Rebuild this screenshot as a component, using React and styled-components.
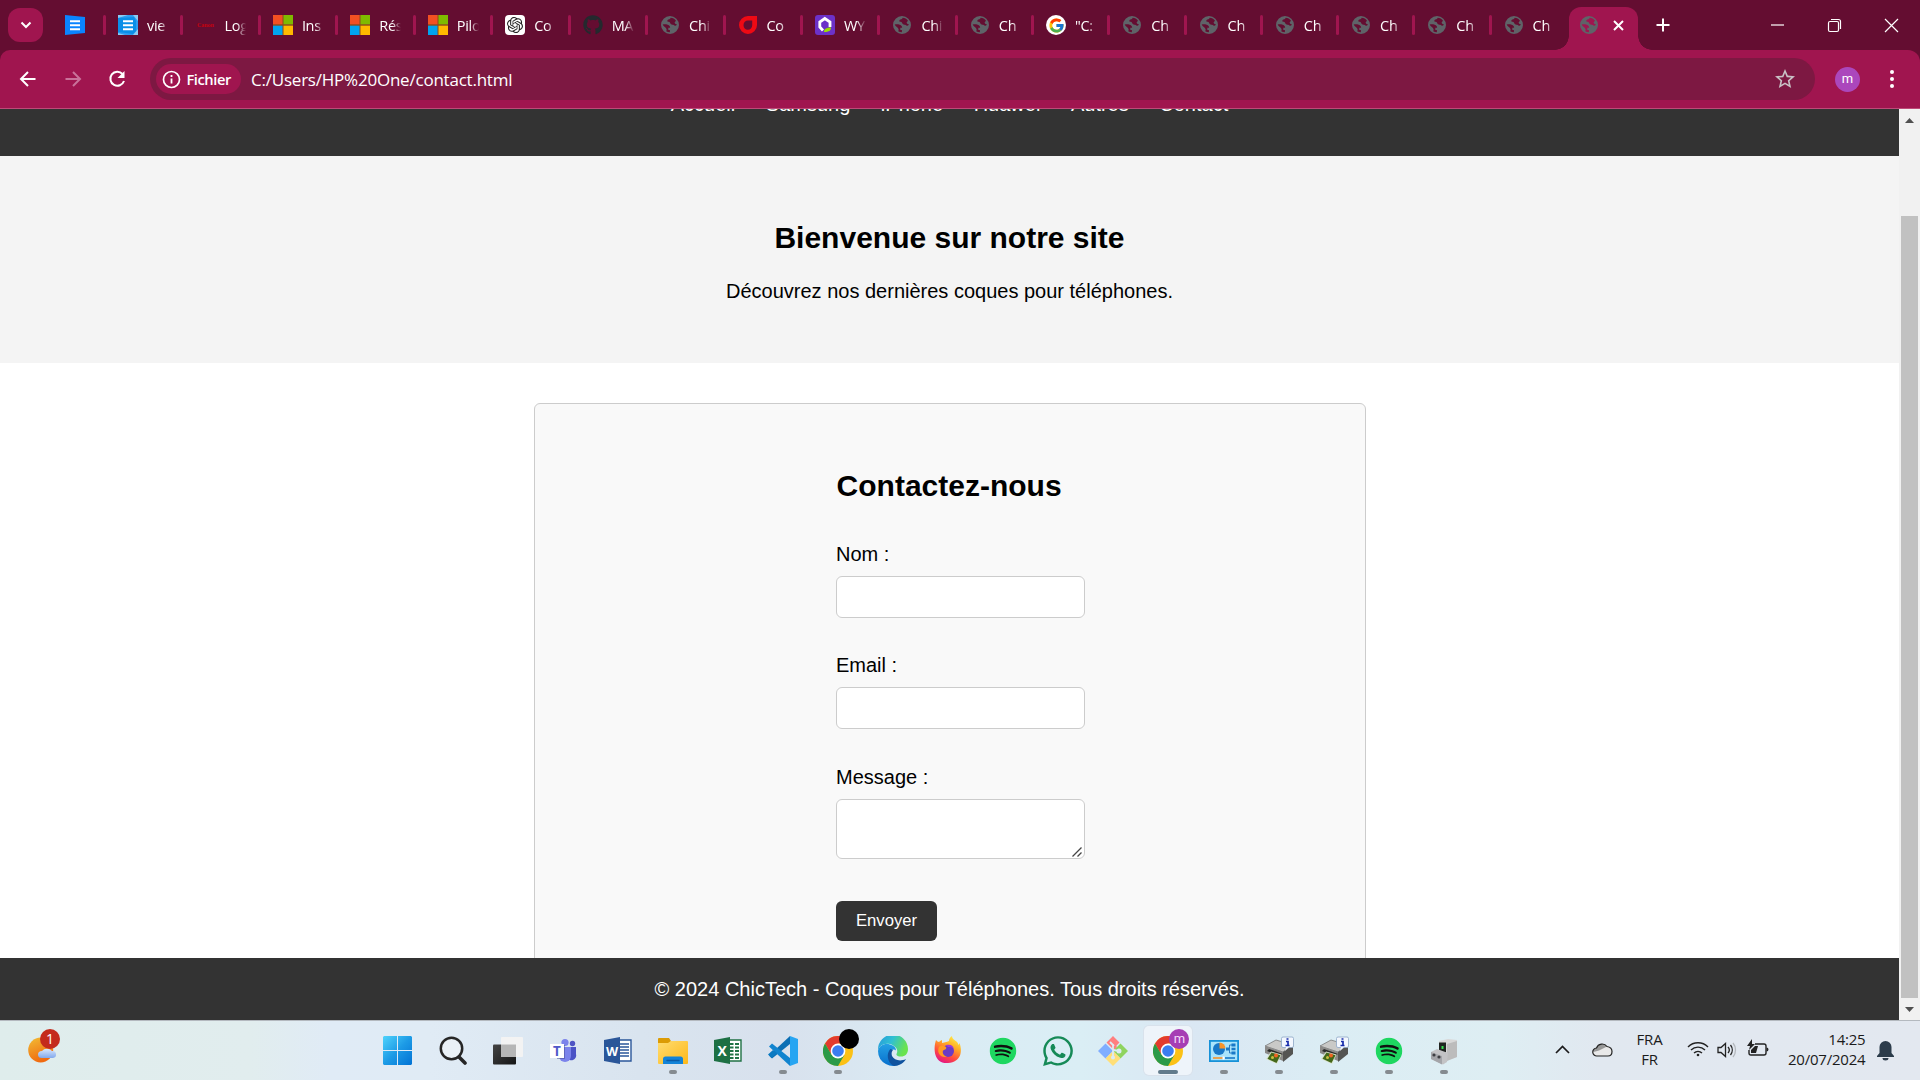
import React from 'react';
import styled, { createGlobalStyle, css } from 'styled-components';
import { FaSpotify, FaWhatsapp, FaGithub } from 'react-icons/fa';
import { FcGoogle } from 'react-icons/fc';
import { SiOpenai } from 'react-icons/si';
import { MdStarOutline } from 'react-icons/md';

const GlobalStyle = createGlobalStyle`
  * { box-sizing: border-box; }
  html, body { margin: 0; padding: 0; overflow: hidden; }
  h2, p { margin: 0; }
`;

const ui = '"Segoe UI", "Open Sans", "Noto Sans", sans-serif';
const arial = '"Liberation Sans", Arial, sans-serif';
const wine = '#640d31';
const pink = '#a0154f';

const Screen = styled.div`
  width: 1920px;
  height: 1080px;
  display: flex;
  flex-direction: column;
  overflow: hidden;
  background: #fff;
  svg { display: block; flex: none; }
`;

/* ---------- tab strip ---------- */
const TabStrip = styled.div`
  height: 50px;
  flex: none;
  display: flex;
  background: ${wine};
  font-family: ${ui};
  color: #fff;
`;
const TabSearch = styled.button`
  width: 35px;
  height: 34px;
  margin: 8px 22px 0 8px;
  padding: 0;
  border: 0;
  border-radius: 12px;
  background: ${pink};
  display: flex;
  align-items: center;
  justify-content: center;
`;
const PinnedTab = styled.div`
  width: 38px;
  padding-top: 15px;
`;
const Tab = styled.div`
  width: ${(p) => p.$width}px;
  flex: none;
  height: 20px;
  margin-top: 15px;
  display: flex;
  align-items: center;
`;
const Separator = styled.span`
  width: 3px;
  height: 20px;
  border-radius: 1.5px;
  background: ${pink};
  margin-right: 12px;
`;
const Favicon = styled.span`
  width: 20px;
  height: 20px;
  display: flex;
  align-items: center;
  justify-content: center;
  flex: none;
`;
const WhiteIcon = styled(Favicon)`
  background: #fff;
  border-radius: ${(p) => (p.$round ? '50%' : '4px')};
`;
const Canon = styled.span`
  color: #c4020f;
  font: bold 6px "Liberation Serif", serif;
`;
const TabTitle = styled.span`
  width: 30px;
  flex: none;
  margin-left: 9px;
  white-space: nowrap;
  font-size: 14.5px;
  line-height: 20px;
  letter-spacing: -0.3px;
  padding-top: 1px;
  mask-image: linear-gradient(90deg, #000 13px, transparent 22px);
`;
const ActiveTab = styled.div`
  position: relative;
  width: 69px;
  height: 43px;
  margin: 7px 0 0 4.3px;
  border-radius: 12px 12px 0 0;
  background: ${pink};
  display: flex;
  align-items: center;
  padding: 0 14px 7px 10px;
  justify-content: space-between;
  &::before, &::after {
    content: '';
    position: absolute;
    bottom: 0;
    width: 14px;
    height: 14px;
  }
  &::before {
    left: -14px;
    background: radial-gradient(circle at 0 0, transparent 13.5px, ${pink} 14px);
  }
  &::after {
    right: -14px;
    background: radial-gradient(circle at 100% 0, transparent 13.5px, ${pink} 14px);
  }
`;
const NewTab = styled.div`
  padding: 18px 0 0 18px;
`;
const WindowControls = styled.div`
  margin-left: auto;
  height: 50px;
  display: flex;
  align-items: center;
  gap: 42px;
  padding-right: 21px;
`;

/* ---------- toolbar ---------- */
const ToolbarBack = styled.div`
  flex: none;
  background: ${wine};
`;
const Toolbar = styled.div`
  height: 59px;
  background: ${pink};
  border-radius: 10px 12px 0 0;
  border-bottom: 1px solid #bd4a78;
  display: flex;
  align-items: center;
  font-family: ${ui};
  color: #fff;
`;
const NavButtons = styled.div`
  width: 150px;
  display: flex;
  gap: 25px;
  padding-left: 18px;
`;
const Omnibox = styled.div`
  width: 1665px;
  height: 42px;
  border-radius: 21px;
  background: #7d1842;
  display: flex;
  align-items: center;
  padding: 0 18px 0 6px;
`;
const Chip = styled.div`
  width: 85px;
  height: 30px;
  border-radius: 15px;
  background: ${pink};
  display: flex;
  align-items: center;
  gap: 5.5px;
  padding-left: 6px;
  font-size: 14.7px;
  font-weight: 600;
  letter-spacing: -0.45px;
`;
const Url = styled.span`
  margin-left: 10px;
  flex: 1;
  font-size: 17px;
  line-height: 24px;
  letter-spacing: -0.22px;
  padding-top: 1px;
`;
const Avatar = styled.div`
  width: ${(p) => p.$size}px;
  height: ${(p) => p.$size}px;
  border-radius: 50%;
  background: #ab47bc;
  color: #fff;
  display: flex;
  align-items: center;
  justify-content: center;
  font: ${(p) => p.$font}px/1 Roboto, sans-serif;
  padding-bottom: 2px;
`;
const ProfileArea = styled.div`
  display: flex;
  align-items: center;
  gap: 29px;
  padding-left: 20px;
`;

/* ---------- page ---------- */
const Viewport = styled.div`
  height: 911px;
  flex: none;
  display: flex;
`;
const Page = styled.div`
  width: 1899px;
  height: 911px;
  display: flex;
  flex-direction: column;
  font: 20px/23px ${arial};
  color: #000;
  background: #fff;
`;
const Header = styled.div`
  height: 47px;
  flex: none;
  overflow: hidden;
  background: #333;
  color: #fff;
  display: flex;
  justify-content: center;
  align-items: flex-end;
  gap: 30.56px;
  padding-bottom: 40px;
`;
const Hero = styled.section`
  height: 207px;
  flex: none;
  padding-top: 65px;
  background: #f4f4f4;
  text-align: center;
`;
const Title = styled.h2`
  font-size: 30px;
  line-height: 34px;
  margin-bottom: ${(p) => p.$gap}px;
  padding-left: ${(p) => p.$indent || 0}px;
`;
const Main = styled.main`
  flex: 1;
  min-height: 0;
  overflow: hidden;
  padding-top: 40px;
`;
const Card = styled.div`
  width: 832px;
  height: 620px;
  margin-left: 534px;
  border: 1px solid #ccc;
  border-radius: 6px;
  background: #f9f9f9;
  padding: 65px 0 0 301px;
`;
const Form = styled.form`
  width: 249px;
  display: flex;
  flex-direction: column;
  align-items: flex-start;
`;
const Label = styled.label`
  margin-bottom: 10px;
`;
const field = css`
  width: 249px;
  background: #fff;
  border: 1px solid #ccc;
  border-radius: 6px;
  outline: 0;
`;
const Input = styled.input`
  ${field}
  height: 42px;
  margin-bottom: ${(p) => p.$after}px;
`;
const TextArea = styled.div`
  ${field}
  height: 60px;
  margin-bottom: 42px;
  display: flex;
  align-items: flex-end;
  justify-content: flex-end;
  padding: 0 2px 1px 0;
`;
const Submit = styled.button`
  width: 101px;
  height: 40px;
  border: 0;
  border-radius: 6px;
  background: #333;
  color: #fff;
  font: 16.667px/20px ${arial};
  padding: 0;
`;
const Footer = styled.footer`
  height: 62px;
  flex: none;
  background: #333;
  color: #fff;
  text-align: center;
  padding-top: 20px;
`;
const Scrollbar = styled.div`
  width: 21px;
  background: #f1f1f1;
  display: flex;
  flex-direction: column;
  align-items: center;
  padding: 9px 1px 8px 0;
`;
const Thumb = styled.div`
  width: 17px;
  height: 782px;
  margin: 93px 0 9px;
  background: #c1c1c1;
`;

/* ---------- taskbar ---------- */
const Taskbar = styled.div`
  height: 60px;
  flex: none;
  display: flex;
  border-top: 1px solid #b4b9bf;
  background: linear-gradient(90deg, #dfedec 0, #e1edee 250px, #e0ebf6 330px, #e0ebf5 430px, #d9e4ef 640px, #d8e1ed 780px, #daebf4 920px, #daeef5 1080px, #dae7f3 1190px, #dbedf4 1330px, #deeef3 1500px, #e1e8f0 1600px, #e3e8f0 100%);
  color: #1b1b1b;
  font-family: ${ui};
`;
const Weather = styled.div`
  width: 370.3px;
  padding: 7px 0 0 28px;
`;
const Apps = styled.div`
  display: flex;
`;
const AppCell = styled.div`
  width: 55.06px;
  height: 59px;
  display: flex;
  justify-content: center;
`;
const Slot = styled.div`
  position: relative;
  width: 48px;
  height: 49px;
  margin-top: 4.5px;
  border-radius: 5px;
  display: flex;
  flex-direction: column;
  align-items: center;
  padding-top: 10px;
  ${(p) => p.$active && 'background: #eef4fa; box-shadow: 0 0 0 1px #d9e2ec;'}
`;
const Indicator = styled.i`
  width: ${(p) => (p.$active ? 20 : 8)}px;
  height: 4px;
  margin-top: 4px;
  border-radius: 2px;
  background: ${(p) => (p.$active ? '#627b8c' : '#858b90')};
`;
const Badge = styled.div`
  position: absolute;
  top: 3px;
  right: 3px;
  width: 20px;
  height: 20px;
  border-radius: 50%;
  background: ${(p) => p.$c};
  color: #f5d9fa;
  font: 13px/19px Roboto, sans-serif;
  text-align: center;
`;
const Tray = styled.div`
  margin-left: auto;
  display: flex;
  align-items: flex-start;
  padding-right: 26.5px;
`;
const TrayIcon = styled.span`
  padding-top: ${(p) => p.$top}px;
  margin-right: ${(p) => p.$gap}px;
`;
const TrayText = styled.div`
  width: ${(p) => p.$w}px;
  margin-right: ${(p) => p.$gap}px;
  padding-top: 9px;
  font-size: 15px;
  line-height: 19.5px;
  text-align: ${(p) => p.$align};
  letter-spacing: ${(p) => p.$ls}px;
  white-space: nowrap;
`;

/* ---------- drawn icons ---------- */
const Stroke = ({ w = 16, h = 16, d, sw = 2, color = '#fff', ...rest }) => (
  <svg width={w} height={h} viewBox={`0 0 ${w} ${h}`} fill="none" stroke={color} strokeWidth={sw} {...rest}>
    <path d={d} />
  </svg>
);
const GlobeIcon = () => (
  <svg width="20" height="20" viewBox="0 0 20 20">
    <path
      fill="#5f6368"
      fillRule="evenodd"
      d="M10 1a9 9 0 1 1 0 18 9 9 0 0 1 0-18zM2.700 9.600c1.500-.4 3.300-.3 5 .1 1.700.5 2.500 1.500 2.400 3.100H8.300v2.100H9.900v2.300A7.300 7.300 0 0 1 6.200 16.200c.8-1 .6-2.200-.5-3.400-1.200-1-2.400-1.800-3-3.200zM10.600 2.800c2.200.1 4.200 1.200 5.400 3-1 .9-1.500 1.600-1.300 2.300.3 1 1.400.9 2.300 1.500-.6 1.300-1.700 1.500-2.900.6-1.200-.7-2.300-.4-3.300-1.200-1-.9-.6-2-2.300-2.200-.9-.1-1.300-.7-1.100-1.400.4-1.300 2.900-.5 3.200-2.600z"
    />
  </svg>
);
const DocIcon = ({ shaded }) => (
  <svg width="20" height="20" viewBox="0 0 20 20">
    {shaded && <path fill="#2f9df0" d="M0 0h20v20H0z" />}
    {shaded && <path fill="#8ccbf2" d="M0 0h10L0 3zM15 0h5v6zM0 18l7 2H0zM20 14v6h-5z" />}
    <path fill={shaded ? '#0a8fe8' : '#0a84ff'} d={shaded ? 'M0 3 16 2l2 4v10l-3 3L0 17z' : 'M0 0l20 2v16L0 20z'} />
    <path stroke="#fff" strokeWidth="2" d="M5 6.200h10M5 10.200h10M5 14.200h10" />
  </svg>
);
const Microsoft = () => (
  <svg width="20" height="20" viewBox="0 0 20 20">
    <path fill="#8b4a1c" d="M0 0h20v20H0z" />
    <path fill="#f25022" d="M0 0h9.500v9.300H0z" />
    <path fill="#7fba00" d="M10.500 0H20v9.300h-9.500z" />
    <path fill="#00a4ef" d="M0 10.700h9.500V20H0z" />
    <path fill="#ffb900" d="M10.500 10.700H20V20h-9.500z" />
  </svg>
);
const Drop = () => (
  <svg width="18" height="18" viewBox="0 0 18 18">
    <path fill="#ed0a14" fillRule="evenodd" d="M9 0h9v9a9 9 0 1 1-9-9zM9 4.500c-2.500 0-4.500 2-4.500 4.700 0 2.600 1.800 4.600 4.300 4.600s4.400-2 4.400-4.600V4.500z" />
  </svg>
);
const Ring = () => (
  <svg width="20" height="20" viewBox="0 0 20 20">
    <rect width="20" height="20" rx="3" fill="#6c31c8" />
    <path d="M8 15.500 4.800 12V7l5-3.500 5.200 3.500v5" fill="none" stroke="#fff" strokeWidth="2.800" />
    <path d="M9 17c0-3 2-4.500 7-4.500 0 3-2 4.500-7 4.500z" fill="#9be000" />
  </svg>
);
const ChromeIcon = () => (
  <svg width="30" height="30" viewBox="0 0 30 30">
    <circle cx="15" cy="15" r="15" fill="#fbc116" />
    <path fill="#e33b2e" d="M2 7.500A15 15 0 0 1 28 7.500H15L8.500 18.750z" />
    <path fill="#2b9a48" d="M2 7.500A15 15 0 0 0 15 30l6.500-11.250L15 22 8.500 18.750z" />
    <circle cx="15" cy="15" r="7.400" fill="#fff" />
    <circle cx="15" cy="15" r="5.800" fill="#3b7df0" />
  </svg>
);
const StartIcon = () => (
  <svg width="29" height="29" viewBox="0 0 29 29">
    <defs>
      <linearGradient id="st" gradientUnits="userSpaceOnUse" x1="0" y1="0" x2="29" y2="29">
        <stop stopColor="#4fd3fc" /><stop offset=".5" stopColor="#1d9be6" /><stop offset="1" stopColor="#0272d4" />
      </linearGradient>
    </defs>
    <path fill="url(#st)" d="M1 0h13v14H0V1zM15 0h13l1 1v13H15zM0 15h14v14H1l-1-1zM15 15h14v13l-1 1H15z" />
  </svg>
);
const SearchIcon = () => (
  <svg width="28" height="30" viewBox="0 0 28 30" fill="none" stroke="#262626">
    <circle cx="12.500" cy="12.500" r="10.700" strokeWidth="2.500" fill="#eaf1f7" />
    <path d="M20 21l6 6" strokeWidth="3.600" strokeLinecap="round" />
  </svg>
);
const TaskViewIcon = () => (
  <svg width="30" height="30" viewBox="0 0 30 30">
    <defs><linearGradient id="tv" x1="0" y1="0" x2="1" y2="1"><stop stopColor="#444" /><stop offset="1" stopColor="#151515" /></linearGradient></defs>
    <rect x="0" y="8.500" width="23" height="20" rx="1" fill="url(#tv)" />
    <rect x="8" y="1" width="22" height="20" rx="1" fill="#f3f3f3" />
    <path d="M8 8.500h15V21H8z" fill="#b6b6b6" />
  </svg>
);
const SvgLetter = styled.text`
  font-family: "Open Sans", sans-serif;
  font-weight: ${(p) => p.$weight || 700};
`;
const TeamsIcon = () => (
  <svg width="30" height="30" viewBox="0 0 30 30">
    <circle cx="24.500" cy="7.500" r="2.700" fill="#4f55c4" />
    <path d="M19 11h9v7a4.500 4.500 0 0 1-9 3z" fill="#4b53c6" />
    <circle cx="17" cy="6.500" r="3.600" fill="#7b83eb" />
    <path d="M11 11h12v9a6 6 0 0 1-12 0z" fill="#7b83eb" />
    <path d="M3 9h14v14H9V9z" fill="#444791" opacity=".5" />
    <path d="M2 8h14v14H2z" fill="#fff" />
    <SvgLetter x="5" y="20" fontSize="13.500" fill="#5059c9">T</SvgLetter>
  </svg>
);
const OfficeIcon = ({ letter, color, dark, grid }) => (
  <svg width="28" height="30" viewBox="0 0 28 30">
    <path d="M14 4h13v21H14z" fill="#fff" stroke={color} strokeWidth="1.400" />
    {grid
      ? <path d="M16 8h3.500M21 8h4M16 11.500h3.500M21 11.500h4M16 15h3.500M21 15h4M16 18.500h3.500M21 18.500h4M16 22h3.500M21 22h4" stroke={color} strokeWidth="2.200" />
      : <path d="M16 8h9M16 11h9M16 14h9M16 17h9M16 20h9" stroke={color} strokeWidth="1.400" />}
    <path d="M0 4 16 1v27L0 25z" fill={dark} />
    <SvgLetter x={grid ? 3.500 : 2} y="19.500" fontSize={grid ? 14 : 12.500} fill="#fff">{letter}</SvgLetter>
  </svg>
);
const FolderIcon = () => (
  <svg width="30" height="30" viewBox="0 0 30 30">
    <defs><linearGradient id="fo" x1="0" y1="0" x2="1" y2="1"><stop stopColor="#ffdc70" /><stop offset="1" stopColor="#fdb819" /></linearGradient></defs>
    <path d="M0 3q0-1 1-1h10l2 3-2 4H0z" fill="#dc9b04" />
    <path d="M0 7h10l3-2h16q1 0 1 1v21q0 1-1 1H1q-1 0-1-1z" fill="url(#fo)" />
    <path d="M5 28v-5q0-2.500 2.500-2.500h15Q25 20.500 25 23v5z" fill="#1383d8" />
    <path d="M9 24.500h12" stroke="#0b5aa5" strokeWidth="1.400" strokeLinecap="round" />
  </svg>
);
const CodeIcon = () => (
  <svg width="30" height="30" viewBox="0 0 30 30">
    <path d="M1 19.500 22 0v8L4 22.500z" fill="#0b6fb4" />
    <path d="M1 10.500 22 30v-8L4 7.500z" fill="#1184cf" />
    <path d="M0 18.500 5 14l4 3-5.500 5z" fill="#0b7ac2" />
    <path d="M22 0l8 3v24l-8 3z" fill="#27a5f2" />
  </svg>
);
const EdgeIcon = () => (
  <svg width="30" height="30" viewBox="0 0 30 30">
    <defs>
      <linearGradient id="ea" x1="0" y1="0" x2="1" y2=".35"><stop stopColor="#2799dc" /><stop offset=".5" stopColor="#30c0d2" /><stop offset="1" stopColor="#69e34f" /></linearGradient>
      <linearGradient id="eb" x1="0" y1="0" x2="0" y2="1"><stop stopColor="#24a0e4" /><stop offset="1" stopColor="#0870cd" /></linearGradient>
    </defs>
    <path d="M0 14A15 15 0 0 1 30 13c0 5-3 7.500-7 7.500-3 0-5-1-4.500-2.500C21 13 17 10 12 8 6 7 2 9 0 14z" fill="url(#ea)" />
    <path d="M0 15C1 9 7 7 12 8.500c4 1 6 3 6 6-2-2-6-1-6 4 0 6 5 9 11 9A15 15 0 0 1 0 15z" fill="url(#eb)" />
    <path d="M12.500 13C8 17 9 27 16 30c5 0 10-3 12-7-6 3-12 1-14-3-1-3 0-5 1-6z" fill="#10539f" />
  </svg>
);
const FirefoxIcon = () => (
  <svg width="30" height="30" viewBox="0 0 30 30">
    <defs><linearGradient id="fx" x1=".8" y1="0" x2=".3" y2="1"><stop stopColor="#fff04a" /><stop offset=".35" stopColor="#ffae24" /><stop offset=".7" stopColor="#ff4b3e" /><stop offset="1" stopColor="#e31587" /></linearGradient></defs>
    <path d="M3 4c1 1 2 2 3 2 1-1 2-1.500 3-2v3c3-1 6-1 7-2 0-2 1-4 3-5 0 3 3 4 5 6 1 1 1 2 1.500 3l1-2c3 8 2 19-11.500 20C1 28 0 13 3 4z" fill="url(#fx)" />
    <circle cx="15" cy="15" r="6" fill="#6a3bc4" />
    <path d="M6 11c3-2 5-1 7 0 1 2-1 2.500-3 3.500-1 3 1 5.500 4 6-5 2-11-3-8-9.500z" fill="#ff9a22" />
    <path d="M13 9c4-1 7 0 8 4-2-2-4-2-6-2z" fill="#9b35df" />
  </svg>
);
const SpotifyIcon = () => (
  <svg width="30" height="30" viewBox="0 0 30 30">
    <circle cx="15" cy="15" r="12" fill="#101010" />
    <FaSpotify x="1.300" y="1.300" size="27.400" color="#1ed760" />
  </svg>
);
const WhatsIcon = () => (
  <svg width="30" height="30" viewBox="0 0 30 30">
    <FaWhatsapp x="-2" y="-2" size="34" color="#168a57" />
  </svg>
);
const GitIcon = () => (
  <svg width="30" height="30" viewBox="0 0 30 30">
    <path d="M15 0l6.500 6.500-3 3c1 3-1 4-3 4L8.500 6.500z" fill="#ff7f7f" />
    <path d="M7.500 7.500 15 15l-7.500 7.500L0 15z" fill="#80aeff" />
    <path d="M22.500 7.500 30 15l-7.500 7.500L15 15z" fill="#8fd45f" />
    <path d="M15 15l7.500 7.500L15 30l-7.500-7.500z" fill="#ffdf78" />
    <circle cx="21" cy="15" r="2.500" fill="#dcecf4" /><circle cx="15" cy="21.500" r="2" fill="#dcecf4" />
    <path d="M15 8v6l6 1M12 6l4 4M15 15v6" stroke="#dcecf4" strokeWidth="1.800" fill="none" />
  </svg>
);
const PanelIcon = () => (
  <svg width="30" height="30" viewBox="0 0 30 30">
    <rect x=".9" y="4.900" width="28.200" height="20.200" fill="#a9e4fb" stroke="#1691d8" strokeWidth="1.800" />
    <circle cx="10" cy="13" r="6" fill="#1879c8" />
    <path d="M10.500 12.500v-6a6 6 0 0 1 6 6z" fill="#f7942a" />
    <path d="M17 13h3.500m0-4v8M20.500 9h3m-3 8h3" stroke="#2b7cc0" fill="none" />
    <path d="M22.500 7.500h4v3h-4zM22.500 11.700h4v2.600h-4zM22.500 15.500h4v3h-4zM17 11.500h3v3h-3z" fill="#1879c8" />
    <path d="M4 22h10" stroke="#f7942a" strokeWidth="1.600" /><path d="M16 22h10" stroke="#1879c8" strokeWidth="1.600" /><path d="M14.500 20.500v3" stroke="#fff" strokeWidth="2" />
  </svg>
);
const PrinterIcon = () => (
  <svg width="30" height="30" viewBox="0 0 30 30">
    <path d="M1 10 12 4l17 5-10 7z" fill="#c9c9c7" stroke="#6c6c6c" strokeWidth=".7" />
    <path d="M1 10l18 6v9L1 17z" fill="#8b8a88" />
    <path d="M19 16 29 9v9l-10 8z" fill="#555553" />
    <path d="M5 13l14 5-4 2-12-5z" fill="#2b2b29" />
    <path d="M7 15.500l10.500 3L13 28 2 23z" fill="#d9e2cc" />
    <path d="M7.500 16.500l9 2.800L12.500 27 3.500 22.800z" fill="#43681a" />
    <circle cx="12" cy="19.500" r="2" fill="#f06422" /><circle cx="8.500" cy="21.500" r="1.500" fill="#c9c03e" />
    <rect x="17.500" y="1" width="12" height="10.500" rx="1.500" fill="#f4f8ff" stroke="#8da6c5" strokeWidth=".8" />
    <path d="M22 11l-1 4 4-4z" fill="#f4f8ff" />
    <path d="M22 5.500h2v4M21.500 9.500h4M22.500 3h2" stroke="#162bab" strokeWidth="1.700" fill="none" />
  </svg>
);
const DeviceIcon = () => (
  <svg width="30" height="30" viewBox="0 0 30 30">
    <path d="M10 5l9-2 9 1v17l-9 3-9-3z" fill="#d8d8d8" />
    <path d="M18 8l10-3v16l-10 4z" fill="#bcbcbc" />
    <path d="M10 6.500h7v10h-7z" fill="#202421" /><path d="M12.500 10h2v3h-2z" fill="#36e150" />
    <path d="M2 16l6-3 11 4-1 9-4 2.500L2 23z" fill="#c3c3c5" />
    <path d="M2 16l11 4v8.500L2 23z" fill="#a4a5a9" />
    <circle cx="5" cy="19" r="1.600" fill="#3d3e42" /><circle cx="10" cy="21" r="1.600" fill="#3d3e42" />
  </svg>
);
const WeatherIcon = () => (
  <svg width="32" height="37" viewBox="0 0 32 37">
    <defs>
      <linearGradient id="su" x1="0" y1="0" x2=".4" y2="1"><stop stopColor="#f2bd35" /><stop offset="1" stopColor="#f06a10" /></linearGradient>
      <linearGradient id="cl" x1="0" y1="0" x2="0" y2="1"><stop stopColor="#d9e8fd" /><stop offset="1" stopColor="#83a9ec" /></linearGradient>
    </defs>
    <circle cx="12.700" cy="22" r="12.500" fill="url(#su)" />
    <path d="M14 30a4 3.500 0 0 1 0-7 6 5 0 0 1 10 0 3.500 3.500 0 0 1 1 7z" fill="url(#cl)" />
    <circle cx="22" cy="11" r="10" fill="#c42b1c" />
    <SvgLetter $weight={400} x="18" y="16" fontSize="14" fill="#fff">1</SvgLetter>
  </svg>
);

const tabs = [
  ['doc', 'vie'], ['canon', 'Log'], ['ms', 'Ins'], ['ms', 'Rés'], ['ms', 'Pilo'], ['ai', 'Co'], ['git', 'MA'],
  ['globe', 'Chi'], ['drop', 'Co'], ['ring', 'WY'], ['globe', 'Chi'], ['globe', 'Ch'], ['google', '"C:'],
  ['globe', 'Ch'], ['globe', 'Ch'], ['globe', 'Ch'], ['globe', 'Ch'], ['globe', 'Ch'], ['globe', 'Ch'],
];
const faviconFor = {
  doc: <DocIcon shaded />,
  canon: <Canon>Canon</Canon>,
  ms: <Microsoft />,
  ai: <WhiteIcon><SiOpenai size={16} color="#222" /></WhiteIcon>,
  git: <FaGithub size={20} color="#24292e" />,
  globe: <GlobeIcon />,
  drop: <Drop />,
  ring: <Ring />,
  google: <WhiteIcon $round><FcGoogle size={17} /></WhiteIcon>,
};
const apps = [
  [StartIcon], [SearchIcon], [TaskViewIcon], [TeamsIcon],
  [() => <OfficeIcon letter="W" color="#2b579a" dark="#2a5699" />],
  [FolderIcon, 'run'],
  [() => <OfficeIcon letter="X" color="#207245" dark="#1d7044" grid />],
  [CodeIcon, 'run'], [ChromeIcon, 'run', 'black'], [EdgeIcon], [FirefoxIcon], [SpotifyIcon], [WhatsIcon], [GitIcon],
  [ChromeIcon, 'active', 'm'], [PanelIcon, 'run'], [PrinterIcon, 'run'], [PrinterIcon, 'run'], [SpotifyIcon, 'run'], [DeviceIcon, 'run'],
];

export default function App() {
  return (
    <Screen>
      <GlobalStyle />
      <TabStrip>
        <TabSearch><Stroke w={12} h={8} d="M1.500 1.500 6 6l4.500-4.500" /></TabSearch>
        <PinnedTab><DocIcon /></PinnedTab>
        {tabs.map(([icon, title], i) => (
          <Tab key={i} $width={i < 11 ? 77.45 : 76.25}>
            <Separator />
            <Favicon>{faviconFor[icon]}</Favicon>
            <TabTitle>{title}</TabTitle>
          </Tab>
        ))}
        <ActiveTab>
          <Favicon>{faviconFor.globe}</Favicon>
          <Stroke w={11} h={11} d="M1 1l9 9M10 1 1 10" />
        </ActiveTab>
        <NewTab><Stroke w={14} h={14} d="M7 .5v13M.5 7h13" /></NewTab>
        <WindowControls>
          <Stroke w={15} h={14} sw={1.2} d="M1 7h13" />
          <Stroke w={15} h={15} sw={1.2} d="M3 3.500h7q1.500 0 1.500 1.500v7q0 1.500-1.500 1.500H3Q1.500 13.500 1.500 12V5Q1.500 3.500 3 3.500zM4 1.500h7.500q2 0 2 2V11" />
          <Stroke w={15} h={15} sw={1.2} d="M1 1l13 13M14 1 1 14" />
        </WindowControls>
      </TabStrip>

      <ToolbarBack>
        <Toolbar>
          <NavButtons>
            <Stroke w={20} h={20} d="M17.500 10H3M10 3l-7 7 7 7" />
            <Stroke w={20} h={20} d="M2.500 10H17M10 3l7 7-7 7" color="#c9729a" />
            <svg width="20" height="20" viewBox="0 0 20 20">
              <path d="M14.500 5A7 7 0 1 0 16 12" fill="none" stroke="#fff" strokeWidth="2" />
              <path d="M16.500 2v7h-7z" fill="#fff" />
            </svg>
          </NavButtons>
          <Omnibox>
            <Chip>
              <svg width="19" height="19" viewBox="0 0 19 19" fill="none" stroke="#fff">
                <circle cx="9.500" cy="9.500" r="8" strokeWidth="1.700" />
                <path d="M9.500 8.500v5M9.500 5v2" strokeWidth="1.800" />
              </svg>
              Fichier
            </Chip>
            <Url>C:/Users/HP%20One/contact.html</Url>
            <MdStarOutline size={24} color="#c9c1c5" />
          </Omnibox>
          <ProfileArea>
            <Avatar $size={25} $font={13}>m</Avatar>
            <svg width="6" height="20" viewBox="0 0 6 20" fill="#fff">
              <circle cx="3" cy="3" r="2" /><circle cx="3" cy="10" r="2" /><circle cx="3" cy="17" r="2" />
            </svg>
          </ProfileArea>
        </Toolbar>
      </ToolbarBack>

      <Viewport>
        <Page>
          <Header>
            {['Accueil', 'Samsung', 'iPhone', 'Huawei', 'Autres', 'Contact'].map((t) => <span key={t}>{t}</span>)}
          </Header>
          <Hero>
            <Title $gap={25}>Bienvenue sur notre site</Title>
            <p>Découvrez nos dernières coques pour téléphones.</p>
          </Hero>
          <Main>
            <Card>
              <Form>
                <Title $gap={40} $indent={0.6}>Contactez-nous</Title>
                <Label>Nom :</Label>
                <Input $after={36} />
                <Label>Email :</Label>
                <Input $after={37} />
                <Label>Message :</Label>
                <TextArea>
                  <Stroke w={10} h={10} sw={1.3} color="#444" d="M.5 9.500l9-9M5.500 9.500l4-4" />
                </TextArea>
                <Submit type="button">Envoyer</Submit>
              </Form>
            </Card>
          </Main>
          <Footer>© 2024 ChicTech - Coques pour Téléphones. Tous droits réservés.</Footer>
        </Page>
        <Scrollbar>
          <svg width="9" height="5" viewBox="0 0 9 5"><path d="M0 5 4.500 0 9 5z" fill="#505050" /></svg>
          <Thumb />
          <svg width="9" height="5" viewBox="0 0 9 5"><path d="M0 0l4.500 5L9 0z" fill="#505050" /></svg>
        </Scrollbar>
      </Viewport>

      <Taskbar>
        <Weather><WeatherIcon /></Weather>
        <Apps>
          {apps.map(([Icon, state, badge], i) => (
            <AppCell key={i}>
              <Slot $active={state === 'active'}>
                <Icon />
                {state && <Indicator $active={state === 'active'} />}
                {badge && <Badge $c={badge === 'm' ? '#a63db4' : '#000'}>{badge === 'm' ? 'm' : ''}</Badge>}
              </Slot>
            </AppCell>
          ))}
        </Apps>
        <Tray>
          <TrayIcon $top={24} $gap={22}><Stroke w={15} h={9} sw={1.7} color="#1b1b1b" d="M1 8l6.500-6.500L14 8" /></TrayIcon>
          <TrayIcon $top={21} $gap={23}>
            <svg width="21" height="15" viewBox="0 0 21 15">
              <path d="M5 14a4 4 0 0 1-.5-8A6 6 0 0 1 15 4.500c3 .5 5 2 5 5s-2 4.500-4 4.500z" fill="#e9e9e9" />
              <path d="M1.500 10C1 7 4 5.500 4.500 6A6 6 0 0 1 15 4.500L7 8.500z" fill="#989898" />
              <path d="M5 14a4 4 0 0 1-.5-8A6 6 0 0 1 15 4.500c3 .5 5 2 5 5s-2 4.500-4 4.500z" fill="none" stroke="#222" strokeWidth="1.200" />
            </svg>
          </TrayIcon>
          <TrayText $w={28} $gap={23} $align="center" $ls={-0.2}>FRA<br />FR</TrayText>
          <TrayIcon $top={20} $gap={8}>
            <svg width="22" height="16" viewBox="0 0 22 16" fill="none" stroke="#222" strokeWidth="1.400">
              <path d="M1 6a14 14 0 0 1 20 0M4 9a10 10 0 0 1 14 0M7 12a6 6 0 0 1 8 0" />
              <circle cx="11" cy="14" r="1.300" fill="#222" stroke="none" />
            </svg>
          </TrayIcon>
          <TrayIcon $top={21} $gap={9}>
            <svg width="21" height="16" viewBox="0 0 21 16" fill="none" stroke="#222" strokeWidth="1.300">
              <path d="M1 5.500h3L8.500 1.500v13L4 10.500H1zM11 5a4.500 4.500 0 0 1 0 6M13.500 3a8 8 0 0 1 0 10" />
              <path d="M16 1a11 11 0 0 1 0 14" stroke="#b4b8bd" />
            </svg>
          </TrayIcon>
          <TrayIcon $top={18} $gap={17}>
            <svg width="22" height="18" viewBox="0 0 22 18">
              <path d="M8 5h9q2 0 2 2v7q0 2-2 2H4q-2 0-2-2v-3" fill="none" stroke="#222" strokeWidth="1.400" />
              <path d="M4 14v-3l4-4h3l-2 7zM19.500 8.500q2 0 2 2t-2 2zM5 0 0 7h3l-1 4 6-6H5z" fill="#222" />
            </svg>
          </TrayIcon>
          <TrayText $w={80} $gap={11} $align="right" $ls={-0.2}>14:25<br />20/07/2024</TrayText>
          <TrayIcon $top={20} $gap={0}>
            <svg width="17" height="20" viewBox="0 0 17 20" fill="#2c3c4b">
              <path d="M8.500 0a6 6 0 0 1 6 6v6l2.500 3v1H0v-1l2.500-3V6a6 6 0 0 1 6-6zM5.500 17h6a3 2.500 0 0 1-6 0z" />
            </svg>
          </TrayIcon>
        </Tray>
      </Taskbar>
    </Screen>
  );
}
